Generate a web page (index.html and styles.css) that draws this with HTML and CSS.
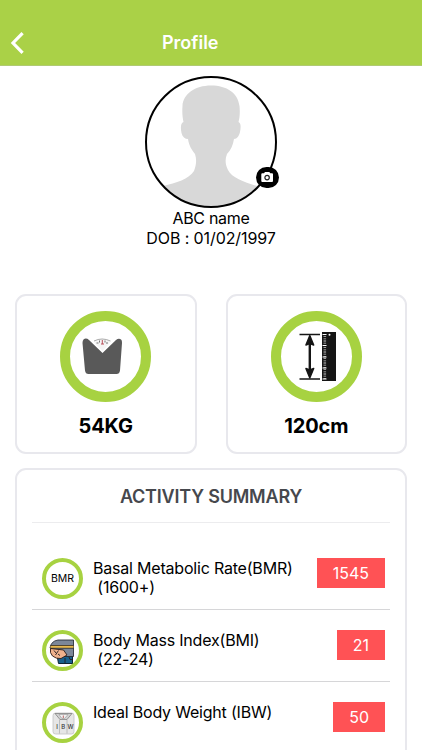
FILE: index.html
```
<!doctype html>
<html lang="en">
  <head>
    <meta charset="utf-8">
    <meta name="viewport" content="width=device-width, initial-scale=1">
    <title>Profile</title>
    <link rel="stylesheet" href="styles.css">
  </head>

  <body>
    <header class="header">
      <svg class="back" width="14" height="22" viewBox="0 0 14 22">
        <path d="M12.6 1.2 L3 11 L12.6 20.8" fill="none" stroke="#fff" stroke-width="3.2"/>
      </svg>
      <h1 class="title">Profile</h1>
    </header>

    <section class="profile">
      <div class="avatar">
        <svg width="132" height="132" viewBox="0 0 132 132">
          <defs>
            <clipPath id="round"><circle cx="66" cy="66" r="65"/></clipPath>
          </defs>
          <path clip-path="url(#round)" fill="#d8d8d8" d="M66 9.500 C50 9.500 38 18 37.500 30 C37 36 37.500 42 38.500 46 C35.500 47 35.500 52 36.500 57 C37.500 61 40 63 43 63 C44 70 47 74 50 78 C52 84 51 90 49 95 C44 103 31 107 18 110 L0 132 H132 L112 110 C99 106 87 102 83 94 C80 88 80 83 82 78 C86 74 88 69 89 63 C92 63 94 60 95 56 C96 51 96 47 93.500 46 C95 41 95 35 94.500 30 C93 17 82 9.500 66 9.500 Z"/>
          <circle cx="66" cy="66" r="65" fill="none" stroke="#000" stroke-width="2"/>
        </svg>
        <svg class="camera" width="23" height="21" viewBox="0 0 23 21">
          <rect width="23" height="21" rx="10.5" fill="#000"/>
          <path d="M6.3 6.3 H8 L9 5 H13.3 L14.3 6.3 H16 Q17 6.3 17 7.3 V14 Q17 15 16 15 H6.3 Q5.3 15 5.3 14 V7.3 Q5.3 6.3 6.3 6.3 Z" fill="#fff"/>
          <circle cx="11.1" cy="10.6" r="2.2" fill="#fff" stroke="#222" stroke-width="1.2"/>
        </svg>
      </div>
      <p class="name">ABC name</p>
      <p class="dob">DOB : 01/02/1997</p>
    </section>

    <section class="stats">
      <div class="card">
        <div class="ring">
          <!-- bathroom scale -->
          <svg width="70" height="70" viewBox="0 0 70 70">
            <path d="M24 19.5 Q32 15.5 40.5 19.5 L39 23 L32.5 30 L25.5 23 Z" fill="#f5f5f5"/>
            <path d="M24 20 Q32 16 40.5 20" fill="none" stroke="#999" stroke-width=".8"/>
            <path d="M26.5 22 h2 M36 22 h2 M29.5 19.5 v2 M35 19.5 v2" stroke="#777" stroke-width="1"/>
            <path d="M32.3 19 v4 M31 23 h3" stroke="#b9505a" stroke-width="1"/>
            <path d="M13.5 18.500 Q16 16.500 19 19 L32.500 32 L46 19 Q49 16.500 51.500 19 Q52 20 52 22 L50 49.500 Q49.500 53 46.500 53 H18.500 Q15.500 53 15 49.500 L12.500 22 Q12.500 19.500 13.500 18.500 Z" fill="#595959"/>
          </svg>
        </div>
        <p class="value">54KG</p>
      </div>
      <div class="card">
        <div class="ring">
          <!-- height arrow and ruler -->
          <svg width="70" height="70" viewBox="0 0 70 70">
            <path d="M18.500 13.500 H39 M18.500 58 H39" stroke="#151515" stroke-width="1.600"/>
            <path d="M28.800 18 V53" stroke="#151515" stroke-width="2.400"/>
            <path d="M28.800 14.500 L32.700 24 L28.800 22.500 L24.900 24 Z M28.800 57 L32.700 47.500 L28.800 49 L24.900 47.500 Z" fill="#151515" stroke="#151515" stroke-width="1.400" stroke-linejoin="round"/>
            <rect x="41" y="11" width="14" height="49" fill="#151515"/>
            <path d="M43.800 13 V59" stroke="#ccc" stroke-width="2.600" stroke-dasharray=".8 1.400"/>
            <path d="M41.500 13.500 H45.500 M41.500 24.500 H45.500 M41.500 36 H45.500 M41.500 47 H45.500 M41.500 58 H45.500" stroke="#fff" stroke-width="1"/>
            <circle cx="48.500" cy="13.800" r="1" fill="#fff"/>
          </svg>
        </div>
        <p class="value">120cm</p>
      </div>
    </section>

    <section class="summary">
      <h2 class="summary-title">ACTIVITY SUMMARY</h2>

      <div class="row">
        <div class="icon">BMR</div>
        <p class="label">Basal Metabolic Rate(BMR)<br>&nbsp;(1600+)</p>
        <span class="badge">1545</span>
      </div>

      <div class="row">
        <div class="icon">
          <!-- waist with measuring tape -->
          <svg width="32" height="32" viewBox="0 0 32 32">
            <path d="M10 20 H25.500 V28.500 H11.500 Z" fill="#17608c" stroke="#0c2433"/>
            <path d="M3 13 Q4 6 11 5 H26.500 V21.500 H17 L9 16 Z" fill="#7c8798" stroke="#1b2028" stroke-width=".8"/>
            <path d="M3.500 13.500 Q2.500 18 5.500 21 Q9 24 14 23.500 L20 20 L16.500 15 Z" fill="#efb18c" stroke="#2a1b16" stroke-width=".9"/>
            <path d="M3.500 11.800 H26.500" stroke="#302a22" stroke-width="3.600"/>
            <path d="M3.500 11.800 H26.500" stroke="#e8b950" stroke-width="2"/>
            <path d="M7 15.500 l2 2.500 M11.500 15.500 l-3 4.500 M11 19 l2 1.500 M18 23 v5 M22 22 l1 2.500 h3" stroke="#211c20" stroke-width=".9" fill="none"/>
          </svg>
        </div>
        <p class="label">Body Mass Index(BMI)<br>&nbsp;(22-24)</p>
        <span class="badge">21</span>
      </div>

      <div class="row">
        <div class="icon">
          <!-- weighing scale -->
          <svg class="ibw" width="32" height="32" viewBox="0 0 32 32">
            <rect x="6" y="6" width="21" height="21" rx="2.500" fill="#e6e6e6" stroke="#c2c2c2" stroke-width=".8"/>
            <path d="M8 6.500 H25 L20 12.500 H13 Z" fill="#d2d2d2" stroke="#777" stroke-width=".7"/>
            <path d="M12 7.500 H21 L17.500 11.500 H15 Z" fill="#f2f2f2" stroke="#888" stroke-width=".5"/>
            <path d="M16.300 8.500 v2.500" stroke="#b66" stroke-width="1"/>
            <path d="M12.500 12.500 V26.500 M20 12.500 V26.500" stroke="#aaa" stroke-width=".7"/>
            <text x="10" y="21.500">I</text>
            <text x="16.300" y="21.500">B</text>
            <text x="23.500" y="21.500">W</text>
          </svg>
        </div>
        <p class="label">Ideal Body Weight (IBW)</p>
        <span class="badge">50</span>
      </div>
    </section>
  </body>
</html>
```
FILE: styles.css
```
* {
  box-sizing:border-box;
}

body {
  margin:0;
  height:750px;
  overflow:hidden;
  font-family:Inter, "Liberation Sans", sans-serif;
  font-size:16px;
  color:#000;
  background-color:#fff;
}

h1, h2, p {
  margin:0;
}

svg {
  display:block;
}

.header {
  display:flex;
  align-items:center;
  height:66px;
  padding:20px 0 0 10px;
  background-color:#aad147;
  border-bottom:1px solid #b0ca72;
}

.title {
  margin-left:138px;
  font-size:18px;
  line-height:22px;
  font-weight:600;
  color:#fff;
}

.profile {
  display:flex;
  flex-direction:column;
  align-items:center;
  padding-top:10px;
  line-height:20px;
  letter-spacing:-.1px;
}

.avatar {
  position:relative;
  width:132px;
  height:132px;
}

.camera {
  position:absolute;
  right:-2px;
  bottom:20px;
}

.name {
  letter-spacing:-.3px;
}

.stats {
  display:flex;
  gap:29px;
  margin-top:46px;
  padding:0 15px;
}

.card {
  display:flex;
  flex-direction:column;
  align-items:center;
  flex:1;
  height:160px;
  padding-top:15px;
  border:2px solid #e8e8ed;
  border-radius:11px;
}

.ring {
  width:91px;
  height:91px;
  border:10px solid #a7d241;
  border-radius:50%;
}

.value {
  margin-top:12px;
  font-size:20px;
  line-height:24px;
  font-weight:700;
  letter-spacing:-.1px;
}

.summary {
  height:300px;
  margin:14px 15px 0;
  padding:0 15px;
  border:2px solid #e8e8ed;
  border-radius:11px;
}

.summary-title {
  height:53px;
  margin-bottom:15px;
  border-bottom:1px solid #ececee;
  font-size:18px;
  line-height:53px;
  font-weight:600;
  letter-spacing:-.2px;
  text-align:center;
  color:#46484d;
}

.row {
  display:flex;
  align-items:flex-start;
  height:72px;
  padding:20px 5px 0 10px;
  border-bottom:1px solid #d6d6d8;
}

.icon {
  display:flex;
  align-items:center;
  justify-content:center;
  width:41px;
  height:41px;
  border:4px solid #a7d241;
  border-radius:50%;
  font-size:10.5px;
}

.ibw text {
  font-size:6px;
  font-weight:500;
  text-anchor:middle;
  fill:#333;
}

.label {
  flex:1;
  margin:1px 0 0 10px;
  line-height:19px;
  letter-spacing:-.2px;
}

.badge {
  padding:0 16px;
  line-height:30px;
  color:#fff;
  background-color:#ff5255;
}
```
